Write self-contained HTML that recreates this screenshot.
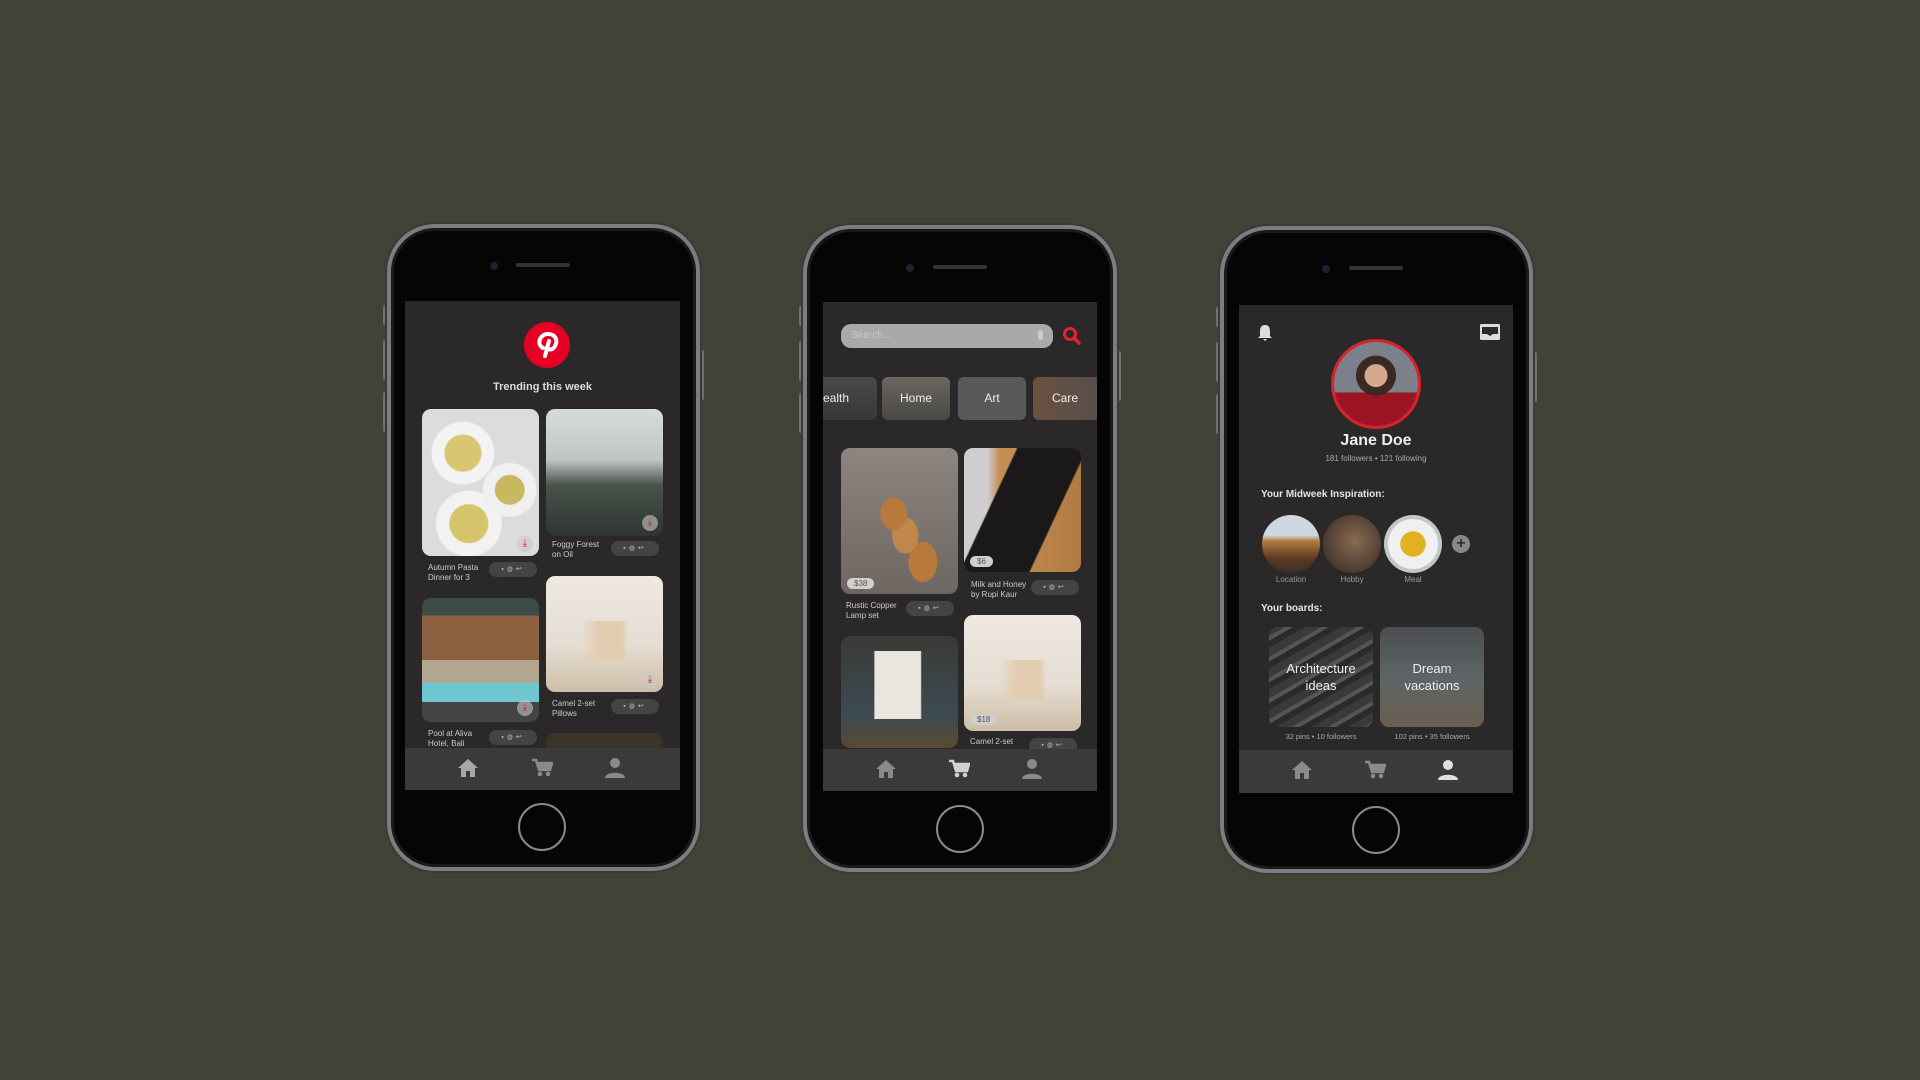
<!DOCTYPE html>
<html><head><meta charset="utf-8"><style>
*{margin:0;padding:0;box-sizing:border-box}
body{width:1920px;height:1080px;background:#424237;position:relative;overflow:hidden;font-family:"Liberation Sans",sans-serif;color:#ddd}
.a{position:absolute}
.phone{position:absolute;border-radius:48px;background:#050505;border:4px solid #7d7d80;box-shadow:0 0 0 2px #3a3a3a,inset 0 0 0 3px #1a1a1a}
.btn{position:absolute;background:#6f6f72;width:4px;border-radius:2px}
.screen{position:absolute;background:#2a2828}
.nav{position:absolute;background:#3b3a3a}
.cam{position:absolute;width:8px;height:8px;border-radius:50%;background:#1d2233}
.spk{position:absolute;height:4px;border-radius:2px;background:#333}
.home{position:absolute;width:48px;height:48px;border-radius:50%;border:2px solid #8a8a8a}
.card{position:absolute;border-radius:9px;overflow:hidden}
.cap{position:absolute;font-size:8px;line-height:10px;color:#ccc}
.pill{position:absolute;width:48px;height:15px;border-radius:8px;background:#444;font-size:7px;color:#bbb;text-align:center;line-height:15px;letter-spacing:3px}
.dl{position:absolute;width:16px;height:16px;border-radius:50%;background:rgba(200,200,200,.6);color:#e0102a;font-size:10px;text-align:center;line-height:16px}
.price{position:absolute;font-size:8px;background:#cfcfcf;color:#555;border-radius:7px;padding:1px 7px}
.chip{position:absolute;border-radius:6px;font-size:12px;color:#eee;text-align:center;line-height:43px;top:377px;height:43px}
.circ{position:absolute;width:58px;height:58px;border-radius:50%}
.lbl{position:absolute;font-size:8px;color:#999;width:70px;text-align:center}
.board{position:absolute;border-radius:9px;font-size:13px;color:#eee;text-align:center;display:flex;align-items:center;justify-content:center;line-height:17px}
</style></head><body>

<!-- PHONE 1 -->
<div class="btn" style="left:383px;top:305px;height:20px"></div>
<div class="btn" style="left:383px;top:340px;height:40px"></div>
<div class="btn" style="left:383px;top:392px;height:40px"></div>
<div class="btn" style="left:700px;top:350px;height:50px"></div>
<div class="phone" style="left:387px;top:224px;width:313px;height:647px"></div>
<div class="cam" style="left:490px;top:262px"></div>
<div class="spk" style="left:516px;top:263px;width:54px"></div>
<div class="home" style="left:518px;top:803px"></div>
<div class="screen" style="left:405px;top:301px;width:275px;height:489px"></div>
<svg class="a" style="left:524px;top:322px" width="46" height="46" viewBox="0 0 46 46"><circle cx="23" cy="23" r="23" fill="#e60023"/><path d="M21 34 L25 19 M19 26 C12 22 16 12 24 12 C32 12 34 19 31 24 C29 28 24 29 23 25" stroke="#fff" stroke-width="4" fill="none" stroke-linecap="round"/></svg>
<div class="a" style="left:405px;width:275px;top:381px;text-align:center;font-size:11px;font-weight:bold;color:#ddd">Trending this week</div>
<div class="card" style="left:422px;top:409px;width:117px;height:147px;background:radial-gradient(circle at 35% 30%,#d8c770 0 14%,#f3f3f3 15% 24%,transparent 25%),radial-gradient(circle at 75% 55%,#c8b860 0 12%,#f0f0f0 13% 22%,transparent 23%),radial-gradient(circle at 40% 78%,#d6c46a 0 14%,#f2f2f2 15% 24%,transparent 25%),#dcdcdc"></div>
<div class="dl" style="left:517px;top:536px">⤓</div>
<div class="cap" style="left:428px;top:563px">Autumn Pasta<br>Dinner for 3</div>
<div class="pill" style="left:489px;top:562px">▪◍↩</div>
<div class="card" style="left:546px;top:409px;width:117px;height:127px;background:linear-gradient(#d8dcd9 0%,#c0c5c2 40%,#4a524c 60%,#2e3530 100%)"></div>
<div class="dl" style="left:642px;top:515px">⤓</div>
<div class="cap" style="left:552px;top:540px">Foggy Forest<br>on Oil</div>
<div class="pill" style="left:611px;top:541px">▪◍↩</div>
<div class="card" style="left:422px;top:598px;width:117px;height:124px;background:linear-gradient(#3c4a48 0 14%,#8b6040 14% 50%,#b3a690 50% 68%,#6fc6d0 68% 84%,#444 84%)"></div>
<div class="dl" style="left:517px;top:700px">⤓</div>
<div class="cap" style="left:428px;top:729px">Pool at Aliva<br>Hotel, Bali</div>
<div class="pill" style="left:489px;top:730px">▪◍↩</div>
<div class="card" style="left:546px;top:576px;width:117px;height:116px;background:linear-gradient(90deg,transparent 30%,#e2cdb0 45% 65%,transparent 70%) 0 45px/100% 40px no-repeat,linear-gradient(#efe9e2,#e5ddd2 60%,#cdbda7)"></div>
<div class="dl" style="left:642px;top:672px">⤓</div>
<div class="cap" style="left:552px;top:699px">Camel 2-set<br>Pillows</div>
<div class="pill" style="left:611px;top:699px">▪◍↩</div>
<div class="card" style="left:546px;top:733px;width:117px;height:15px;background:#3b3328;border-radius:9px 9px 0 0"></div>
<div class="nav" style="left:405px;top:748px;width:275px;height:42px"></div>

<!-- PHONE 2 -->
<div class="btn" style="left:799px;top:306px;height:20px"></div>
<div class="btn" style="left:799px;top:341px;height:40px"></div>
<div class="btn" style="left:799px;top:393px;height:40px"></div>
<div class="btn" style="left:1117px;top:351px;height:50px"></div>
<div class="phone" style="left:803px;top:225px;width:314px;height:647px"></div>
<div class="cam" style="left:906px;top:264px"></div>
<div class="spk" style="left:933px;top:265px;width:54px"></div>
<div class="home" style="left:936px;top:805px"></div>
<div class="screen" style="left:823px;top:302px;width:274px;height:489px"></div>
<div class="a" style="left:841px;top:324px;width:212px;height:24px;border-radius:10px;background:#a9a9a9;font-size:10px;color:#ccc;line-height:24px;padding-left:10px">Search...</div>
<div class="a" style="left:1038px;top:330px;width:5px;height:10px;border-radius:3px;background:#ccc"></div>
<svg class="a" style="left:1062px;top:326px" width="20" height="20" viewBox="0 0 20 20"><circle cx="8" cy="8" r="5.5" stroke="#e8202e" stroke-width="3" fill="none"/><path d="M12 12 L17 17" stroke="#e8202e" stroke-width="3.5" stroke-linecap="round"/></svg>
<div class="chip" style="left:823px;width:54px;background:linear-gradient(#4a4a48,#3a3836);border-radius:0 6px 6px 0;text-align:left">ealth</div>
<div class="chip" style="left:882px;width:68px;background:linear-gradient(#6a6660,#4a4843)">Home</div>
<div class="chip" style="left:958px;width:68px;background:#5a5858">Art</div>
<div class="chip" style="left:1033px;width:64px;background:linear-gradient(90deg,#6b5040,#56504a);border-radius:6px 0 0 6px">Care</div>
<div class="card" style="left:841px;top:448px;width:117px;height:146px;background:radial-gradient(ellipse at 45% 45%,#b77a3a 0 14%,transparent 15%),radial-gradient(ellipse at 55% 60%,#c0874a 0 14%,transparent 15%),radial-gradient(ellipse at 70% 78%,#b77a3a 0 12%,transparent 13%),linear-gradient(#8c8580,#6d6661)"></div>
<div class="price" style="left:847px;top:578px">$38</div>
<div class="cap" style="left:846px;top:601px">Rustic Copper<br>Lamp set</div>
<div class="pill" style="left:906px;top:601px">▪◍↩</div>
<div class="card" style="left:964px;top:448px;width:117px;height:124px;background:linear-gradient(115deg,transparent 30%,#1a1818 31% 70%,transparent 71%),linear-gradient(90deg,#d0cdd2 0 20%,#c48f55 30%,#b07a43)"></div>
<div class="price" style="left:970px;top:556px">$6</div>
<div class="cap" style="left:971px;top:580px">Milk and Honey<br>by Rupi Kaur</div>
<div class="pill" style="left:1031px;top:580px">▪◍↩</div>
<div class="card" style="left:841px;top:636px;width:117px;height:112px;background:linear-gradient(90deg,transparent 28%,#eae6dd 29% 68%,transparent 69%) 0 15px/100% 68px no-repeat,linear-gradient(#3a3a36,#3c4a52 70%,#5a4a30)"></div>
<div class="card" style="left:964px;top:615px;width:117px;height:116px;background:linear-gradient(90deg,transparent 30%,#e2cdb0 45% 65%,transparent 70%) 0 45px/100% 40px no-repeat,linear-gradient(#efe9e2,#e5ddd2 60%,#cdbda7)"></div>
<div class="price" style="left:970px;top:714px">$18</div>
<div class="cap" style="left:970px;top:737px">Camel 2-set</div>
<div class="pill" style="left:1029px;top:738px">▪◍↩</div>
<div class="nav" style="left:823px;top:749px;width:274px;height:42px"></div>

<!-- PHONE 3 -->
<div class="btn" style="left:1216px;top:307px;height:20px"></div>
<div class="btn" style="left:1216px;top:342px;height:40px"></div>
<div class="btn" style="left:1216px;top:394px;height:40px"></div>
<div class="btn" style="left:1533px;top:352px;height:50px"></div>
<div class="phone" style="left:1220px;top:226px;width:313px;height:647px"></div>
<div class="cam" style="left:1322px;top:265px"></div>
<div class="spk" style="left:1349px;top:266px;width:54px"></div>
<div class="home" style="left:1352px;top:806px"></div>
<div class="screen" style="left:1239px;top:305px;width:274px;height:488px"></div>
<svg class="a" style="left:1256px;top:324px" width="18" height="18" viewBox="0 0 18 18"><path d="M9 1 C5 1 4 4 4 8 L4 12 L2 14 L16 14 L14 12 L14 8 C14 4 13 1 9 1Z M7 15 L11 15 L9 17Z" fill="#ddd"/></svg>
<svg class="a" style="left:1479px;top:323px" width="22" height="18" viewBox="0 0 22 18"><rect x="1" y="1" width="20" height="16" rx="1.5" fill="#ddd"/><path d="M3 4 L19 4 L19 11 L14 11 L11 13 L8 11 L3 11Z" fill="#2a2828"/></svg>
<div class="a" style="left:1331px;top:339px;width:90px;height:90px;border-radius:50%;border:3px solid #d9232b;background:radial-gradient(circle at 50% 40%,#d6a88e 0 17%,#3a2a22 18% 30%,transparent 31%),linear-gradient(#7b808a 0 60%,#9c1525 60%)"></div>
<div class="a" style="left:1239px;width:274px;top:432px;text-align:center;font-size:16px;font-weight:bold;color:#eee">Jane Doe</div>
<div class="a" style="left:1239px;width:274px;top:454px;text-align:center;font-size:8px;color:#aaa">181 followers • 121 following</div>
<div class="a" style="left:1261px;top:489px;font-size:10px;font-weight:bold;color:#e6e6e6">Your Midweek Inspiration:</div>
<div class="circ" style="left:1262px;top:515px;background:linear-gradient(#cfd8e0 0 35%,#b07a40 45%,#5a3a20 75%,#3a3028)"></div>
<div class="circ" style="left:1323px;top:515px;background:radial-gradient(circle at 55% 45%,#8a6a50,#4a3a30 70%)"></div>
<div class="circ" style="left:1384px;top:515px;background:radial-gradient(circle,#e2b020 0 30%,#f0f0f0 32% 60%,#c0c8cc 62%)"></div>
<div class="a" style="left:1452px;top:535px;width:18px;height:18px;border-radius:50%;background:#888;color:#333;font-size:16px;line-height:18px;text-align:center;font-weight:bold">+</div>
<div class="lbl" style="left:1256px;top:575px">Location</div>
<div class="lbl" style="left:1317px;top:575px">Hobby</div>
<div class="lbl" style="left:1378px;top:575px">Meal</div>
<div class="a" style="left:1261px;top:603px;font-size:10px;font-weight:bold;color:#e6e6e6">Your boards:</div>
<div class="board" style="left:1269px;top:627px;width:104px;height:100px;background:repeating-linear-gradient(150deg,#3a3a3a 0 8px,#555 8px 12px,#2a2a2a 12px 18px)">Architecture<br>ideas</div>
<div class="board" style="left:1380px;top:627px;width:104px;height:100px;background:linear-gradient(#4a4e50,#5e6466 50%,#6a5e50)">Dream<br>vacations</div>
<div class="a" style="left:1269px;width:104px;top:732px;text-align:center;font-size:7.5px;color:#aaa">32 pins • 10 followers</div>
<div class="a" style="left:1380px;width:104px;top:732px;text-align:center;font-size:7.5px;color:#aaa">102 pins • 35 followers</div>
<div class="nav" style="left:1239px;top:750px;width:274px;height:43px"></div>

<!-- nav icons -->
<svg width="0" height="0" style="position:absolute"><defs>
<g id="hm"><path d="M11 2 L1 11 L4 11 L4 20 L9 20 L9 14 L13 14 L13 20 L18 20 L18 11 L21 11Z"/></g>
<g id="ct"><path d="M1 3 L5 3 L8 13 L19 13 L21 6 L6 6" fill="none" stroke-width="2.5"/><path d="M6 6 L21 6 L19 13 L8 13Z"/><circle cx="9" cy="17" r="1.8"/><circle cx="17" cy="17" r="1.8"/></g>
<g id="us"><circle cx="11" cy="6" r="5"/><path d="M1 21 C1 14 21 14 21 21Z"/></g>
</defs></svg>
<svg class="a" style="left:457px;top:757px" width="22" height="22" fill="#a8a8a8"><use href="#hm"/></svg>
<svg class="a" style="left:531px;top:757px" width="22" height="22" fill="#8a8a8a" stroke="#8a8a8a"><use href="#ct"/></svg>
<svg class="a" style="left:604px;top:757px" width="22" height="22" fill="#8a8a8a"><use href="#us"/></svg>
<svg class="a" style="left:875px;top:758px" width="22" height="22" fill="#8a8a8a"><use href="#hm"/></svg>
<svg class="a" style="left:948px;top:758px" width="22" height="22" fill="#d0d0d0" stroke="#d0d0d0"><use href="#ct"/></svg>
<svg class="a" style="left:1021px;top:758px" width="22" height="22" fill="#8a8a8a"><use href="#us"/></svg>
<svg class="a" style="left:1291px;top:759px" width="22" height="22" fill="#8a8a8a"><use href="#hm"/></svg>
<svg class="a" style="left:1364px;top:759px" width="22" height="22" fill="#8a8a8a" stroke="#8a8a8a"><use href="#ct"/></svg>
<svg class="a" style="left:1437px;top:759px" width="22" height="22" fill="#e0e0e0"><use href="#us"/></svg>
</body></html>
